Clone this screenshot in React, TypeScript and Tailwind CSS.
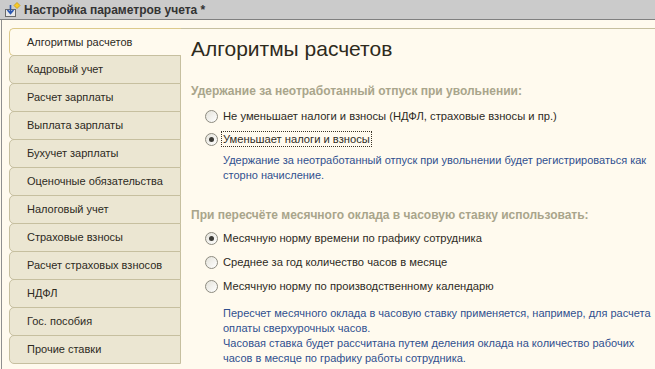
import React from "react";

const tabs = [
  "Алгоритмы расчетов",
  "Кадровый учет",
  "Расчет зарплаты",
  "Выплата зарплаты",
  "Бухучет зарплаты",
  "Оценочные обязательства",
  "Налоговый учет",
  "Страховые взносы",
  "Расчет страховых взносов",
  "НДФЛ",
  "Гос. пособия",
  "Прочие ставки",
];

const Radio = ({ checked, label, focused }: { checked?: boolean; label: string; focused?: boolean }) => (
  <div className="flex h-[20px] items-center whitespace-nowrap pl-[14px] text-[11.2px]">
    <span className="relative flex h-[13px] w-[13px] shrink-0 items-center justify-center rounded-full border border-[#8d8b80] bg-gradient-to-br from-[#e4e2da] to-white">
      {checked ? <span className="h-[5px] w-[5px] rounded-full bg-[#3b3a36]" /> : null}
    </span>
    <span
      className={
        focused
          ? "ml-[3px] border border-dotted border-[#3a3428] px-[1px] leading-[14px]"
          : "ml-[5px] leading-[14px]"
      }
    >
      {label}
    </span>
  </div>
);

const App = () => {
  return (
    <div
      className="flex h-[369px] w-[655px] flex-col overflow-hidden bg-[#fffaee] text-[12px] text-[#2d2a1e]"
      style={{ fontFamily: '"Liberation Sans", Arial, sans-serif' }}
    >
      <div className="flex h-[20px] shrink-0 items-center border-b border-[#808080] bg-[#cbcbcb] pl-[4px]">
        <svg width="18" height="16" viewBox="0 0 18 16">
          <rect x="1.5" y="7.5" width="10" height="7" fill="#e8e8e8" stroke="#6a6a6a" />
          <path d="M6.5 3v8M3.5 8l3 3.5 3-3.5" fill="none" stroke="#2a56b0" strokeWidth="1.6" />
          <path d="M13 0.5l3 3-3 3-3-3z" fill="#f6c928" stroke="#c99a10" strokeWidth="0.8" />
        </svg>
        <span className="ml-[2px] text-[12px] font-bold text-[#333333]">Настройка параметров учета *</span>
      </div>
      <div className="ml-[1px] flex min-h-0 flex-1 border-l border-[#8f8f8f]">
        <div className="w-[7px] shrink-0" />
        <div className="flex w-[172px] shrink-0 flex-col pt-[8px] text-[11px]">
          {tabs.map((t, i) =>
            i === 0 ? (
              <div
                key={t}
                className="flex h-[28px] shrink-0 items-center rounded-l-[5px] border border-r-0 border-[#dcc98a] bg-[#fffaee] pl-[17px] text-[#2d2a1e]"
              >
                {t}
              </div>
            ) : (
              <div
                key={t}
                className="-mt-px flex h-[29px] shrink-0 items-center rounded-l-[5px] border border-[#c6bf9f] bg-[#ebe6d2] pl-[17px] text-[#2d2a1e]"
              >
                {t}
              </div>
            ),
          )}
        </div>
        <div className="mt-[8px] min-w-0 flex-1 whitespace-nowrap border-t border-[#c6bf9f] pl-[10px]">
          <div className="mt-[8px] text-[21px] leading-[24px] text-[#2e2a1c]">Алгоритмы расчетов</div>
          <div className="mt-[23px] font-bold leading-[14px] text-[#a9a58b]">
            Удержание за неотработанный отпуск при увольнении:
          </div>
          <div className="mt-[8px]">
            <Radio label="Не уменьшает налоги и взносы (НДФЛ, страховые взносы и пр.)" />
          </div>
          <div className="mt-[3px]">
            <Radio checked focused label="Уменьшает налоги и взносы" />
          </div>
          <div className="mt-[4px] pl-[32px] text-[11px] leading-[15px] text-[#30508e]">
            Удержание за неотработанный отпуск при увольнении будет регистрироваться как
            <br />
            сторно начисление.
          </div>
          <div className="mt-[25px] font-bold leading-[14px] text-[#a9a58b]">
            При пересчёте месячного оклада в часовую ставку использовать:
          </div>
          <div className="mt-[6px] flex flex-col gap-[4px]">
            <Radio checked label="Месячную норму времени по графику сотрудника" />
            <Radio label="Среднее за год количество часов в месяце" />
            <Radio label="Месячную норму по производственному календарю" />
          </div>
          <div className="mt-[10px] pl-[32px] text-[11px] leading-[15px] text-[#30508e]">
            Пересчет месячного оклада в часовую ставку применяется, например, для расчета
            <br />
            оплаты сверхурочных часов.
            <br />
            Часовая ставка будет рассчитана путем деления оклада на количество рабочих
            <br />
            часов в месяце по графику работы сотрудника.
          </div>
        </div>
      </div>
    </div>
  );
};

export default App;
